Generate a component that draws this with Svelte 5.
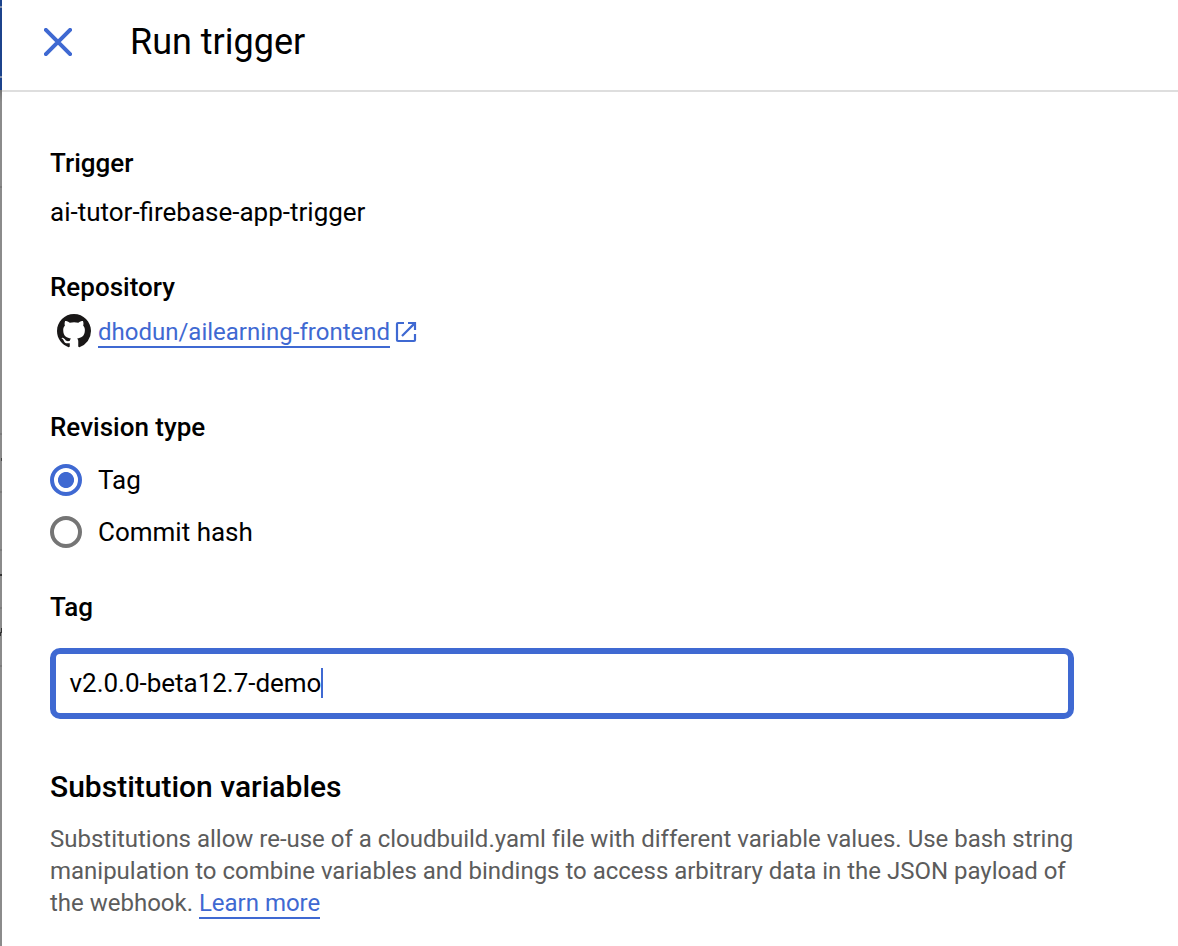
<script>
  let revision = $state('tag');
  const options = [
    { id: 'tag', label: 'Tag' },
    { id: 'commit', label: 'Commit hash' }
  ];
</script>

<div class="page">
  <div class="edge"></div>
  <section class="panel">
    <header>
      <svg class="close" viewBox="0 0 28 28" aria-label="Close">
        <path d="M1.9 1.9 26.1 26.1M26.1 1.9 1.9 26.1" />
      </svg>
      <h1>Run trigger</h1>
    </header>
    <main>
      <h2>Trigger</h2>
      <p class="value">ai-tutor-firebase-app-trigger</p>

      <h2 class="repo-title">Repository</h2>
      <div class="repo">
        <svg class="github" viewBox="0 0 16 16" aria-hidden="true">
          <path d="M8 0C3.58 0 0 3.58 0 8c0 3.54 2.29 6.53 5.47 7.59.4.07.55-.17.55-.38 0-.19-.01-.82-.01-1.49-2.01.37-2.53-.49-2.69-.94-.09-.23-.48-.94-.82-1.13-.28-.15-.68-.52-.01-.53.63-.01 1.08.58 1.23.82.72 1.21 1.87.87 2.33.66.07-.52.28-.87.51-1.07-1.78-.2-3.64-.89-3.64-3.95 0-.87.31-1.59.82-2.15-.08-.2-.36-1.02.08-2.12 0 0 .67-.21 2.2.82.64-.18 1.32-.27 2-.27s1.36.09 2 .27c1.53-1.04 2.2-.82 2.2-.82.44 1.1.16 1.92.08 2.12.51.56.82 1.27.82 2.15 0 3.07-1.87 3.75-3.65 3.95.29.25.54.73.54 1.48 0 1.07-.01 1.93-.01 2.2 0 .21.15.46.55.38A8.01 8.01 0 0 0 16 8c0-4.42-3.58-8-8-8z" />
        </svg>
        <a href="#repo">dhodun/ailearning-frontend</a>
        <svg class="external" viewBox="0 0 20 20" aria-hidden="true">
          <path d="M8 1H2Q1 1 1 2V18Q1 19 2 19H18Q19 19 19 18V12M12 1H19V8M18.6 1.4 6 14" />
        </svg>
      </div>

      <h2 class="revision-title">Revision type</h2>
      <div class="options">
        {#each options as option}
          <label>
            <input type="radio" name="revision" value={option.id} bind:group={revision} />
            <span>{option.label}</span>
          </label>
        {/each}
      </div>

      <h2 class="tag-title">Tag</h2>
      <div class="field"><span>v2.0.0-beta12.7-demo</span><i class="caret"></i></div>

      <h3>Substitution variables</h3>
      <p class="help">
        Substitutions allow re-use of a cloudbuild.yaml file with different variable values. Use bash string<br />
        manipulation to combine variables and bindings to access arbitrary data in the JSON payload of<br />
        the webhook. <a href="#learn">Learn more</a>
      </p>
    </main>
  </section>
</div>

<style>
  :global(body) {
    margin: 0;
    background: #fff;
    overflow: hidden;
  }
  .page {
    display: flex;
    width: 1178px;
    height: 946px;
    overflow: hidden;
    font-family: Roboto, sans-serif;
    color: #000;
  }
  .edge {
    flex: 0 0 2px;
    background:
      linear-gradient(#333, #333) 0 574px / 2px 2px no-repeat,
      linear-gradient(#444, #444) 1px 458px / 1px 3px no-repeat,
      linear-gradient(#333, #333) 1px 628px / 1px 5px no-repeat,
      linear-gradient(#333, #333) 0 632px / 1px 4px no-repeat,
      linear-gradient(#7b7b7b, #7b7b7b) 0 186px / 2px 2px no-repeat,
      linear-gradient(#7b7b7b, #7b7b7b) 0 433px / 2px 2px no-repeat,
      linear-gradient(#7b7b7b, #7b7b7b) 0 491px / 2px 2px no-repeat,
      linear-gradient(#7b7b7b, #7b7b7b) 0 549px / 2px 2px no-repeat,
      linear-gradient(#7b7b7b, #7b7b7b) 0 607px / 2px 2px no-repeat,
      linear-gradient(#7b7b7b, #7b7b7b) 0 665px / 2px 2px no-repeat,
      linear-gradient(#1c438c 0 6px, #8190ae 6px 8px, #1c438c 8px 76px, #8190ae 76px 78px, #1c438c 78px 90px, #737373 90px, #8b8b8b 102px);
  }
  .panel {
    flex: 1;
    min-width: 0;
  }
  header {
    display: flex;
    align-items: center;
    height: 92px;
    padding: 0 0 0 42px;
    border-bottom: 2px solid #dedede;
    box-sizing: border-box;
  }
  .close {
    width: 28px;
    height: 28px;
    margin: -6px 58px 0 0;
    fill: none;
    stroke: #3f69d2;
    stroke-width: 4;
    stroke-linecap: round;
  }
  h1 {
    margin: -5px 0 0;
    font-size: 36px;
    line-height: 49px;
    font-weight: 400;
  }
  main {
    padding: 55px 0 0 48px;
  }
  h2 {
    margin: 0;
    font-size: 26px;
    line-height: 32px;
    font-weight: 500;
  }
  .value {
    margin: 17px 0 0;
    font-size: 26px;
    line-height: 32px;
  }
  .repo-title {
    margin-top: 43px;
  }
  .repo {
    display: flex;
    height: 48px;
    margin-top: 11px;
    padding-left: 7px;
    font-size: 24px;
  }
  .github {
    width: 34px;
    height: 34px;
    margin: 0 7px 0 0;
    fill: #191717;
  }
  a {
    color: #3f69d2;
    text-decoration: none;
    border-bottom: 2px solid #3f69d2;
  }
  .repo a {
    height: 32px;
    line-height: 37px;
  }
  .external {
    width: 20px;
    height: 20px;
    margin: 8px 0 0 6px;
    fill: none;
    stroke: #3f69d2;
    stroke-width: 2.2;
    overflow: visible;
  }
  .revision-title {
    margin-top: 49px;
  }
  .options {
    display: grid;
    gap: 20px;
    margin-top: 21px;
  }
  label {
    display: flex;
    align-items: center;
    gap: 16px;
    height: 32px;
    font-size: 26px;
    line-height: 32px;
  }
  input {
    appearance: none;
    box-sizing: border-box;
    width: 32px;
    height: 32px;
    margin: 0;
    border: 4px solid #757575;
    border-radius: 50%;
  }
  input:checked {
    border-color: #3f69d2;
    background: radial-gradient(circle, #3f69d2 7.6px, #fff 8.4px);
  }
  .tag-title {
    margin-top: 43px;
  }
  .field {
    display: flex;
    align-items: center;
    box-sizing: border-box;
    width: 1024px;
    height: 71px;
    margin-top: 25px;
    padding: 0 0 2px 13.5px;
    border: 6px solid #3f69d2;
    border-radius: 10px;
    font-size: 26px;
    line-height: 32px;
    letter-spacing: -0.02px;
  }
  .caret {
    width: 2px;
    height: 30px;
    background: #3f69d2;
  }
  h3 {
    margin: 49px 0 0;
    font-size: 30px;
    line-height: 38px;
    font-weight: 500;
  }
  .help {
    margin: 17px 0 0;
    font-size: 24px;
    line-height: 32px;
    letter-spacing: -0.01px;
    color: #5c5c5c;
    white-space: nowrap;
  }
</style>
